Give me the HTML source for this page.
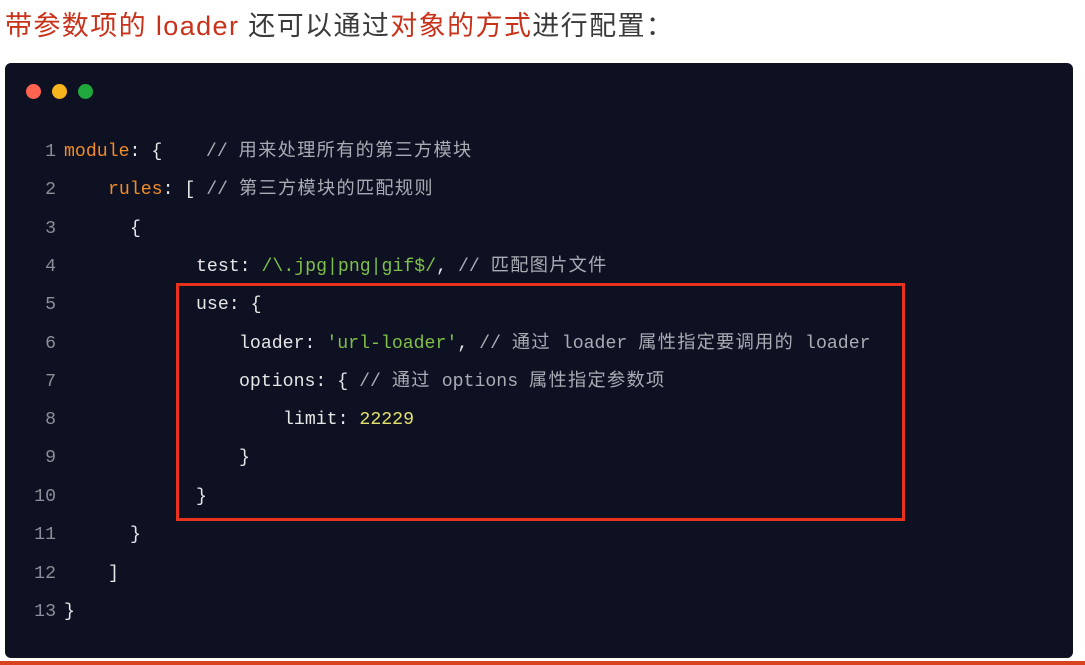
<!DOCTYPE html>
<html><head><meta charset="utf-8"><style>
body{margin:0;width:1085px;height:665px;background:#fff;position:relative;overflow:hidden;font-family:"Liberation Sans","Noto Sans CJK SC",sans-serif}
.title{position:absolute;left:5px;top:8px;font-size:27px;line-height:36px;color:#3a3a3a;white-space:nowrap;letter-spacing:1.4px}
.r{color:#c8321a}
.panel{position:absolute;left:5px;top:63px;width:1068px;height:595px;background:#0d1122;border-radius:6px}
.bar{position:absolute;left:0;top:661px;width:1085px;height:4px;background:#d9421f}
.dot{position:absolute;width:15px;height:15px;border-radius:50%;top:84px}
.ln{position:absolute;left:0;width:1085px;height:24px;font-family:"Liberation Mono","Noto Sans CJK SC",monospace;font-size:18.2px;color:#e6e6e6;white-space:pre;line-height:24px;overflow:visible}
.n{position:absolute;width:56px;left:0;top:2px;text-align:right;color:#8a8f99}
.c{position:absolute;top:2px}
.k{color:#f08c2a}.s{color:#7fbf4a}.y{color:#e5e06a}.g{color:#a8acb3}
.cj{letter-spacing:1.3px}
.box{position:absolute;left:176px;top:283px;width:723px;height:232px;border:3px solid #e8321e}
</style></head><body>
<div class="title"><span class="r">带参数项的 loader</span> 还可以通过<span class="r">对象的方式</span>进行配置：</div>
<div class="panel"></div>
<div class="dot" style="left:26px;background:#ff6450"></div>
<div class="dot" style="left:52px;background:#f6b51c"></div>
<div class="dot" style="left:78px;background:#20a83c"></div>
<div class="ln" style="top:138px"><span class="n">1</span><span class="c" style="left:64px"><span class="k">module</span>: {    <span class="g">// <span class="cj">用来处理所有的第三方模块</span></span></span></div>
<div class="ln" style="top:176px"><span class="n">2</span><span class="c" style="left:108px"><span class="k">rules</span>: [ <span class="g">// <span class="cj">第三方模块的匹配规则</span></span></span></div>
<div class="ln" style="top:215px"><span class="n">3</span><span class="c" style="left:130px">{</span></div>
<div class="ln" style="top:253px"><span class="n">4</span><span class="c" style="left:196px">test: <span class="s">/\.jpg|png|gif$/</span>, <span class="g">// <span class="cj">匹配图片文件</span></span></span></div>
<div class="ln" style="top:291px"><span class="n">5</span><span class="c" style="left:196px">use: {</span></div>
<div class="ln" style="top:330px"><span class="n">6</span><span class="c" style="left:239px">loader: <span class="s">'url-loader'</span>, <span class="g">// <span class="cj">通过</span> loader <span class="cj">属性指定要调用的</span> loader</span></span></div>
<div class="ln" style="top:368px"><span class="n">7</span><span class="c" style="left:239px">options: { <span class="g">// <span class="cj">通过</span> options <span class="cj">属性指定参数项</span></span></span></div>
<div class="ln" style="top:406px"><span class="n">8</span><span class="c" style="left:283px">limit: <span class="y">22229</span></span></div>
<div class="ln" style="top:444px"><span class="n">9</span><span class="c" style="left:239px">}</span></div>
<div class="ln" style="top:483px"><span class="n">10</span><span class="c" style="left:196px">}</span></div>
<div class="ln" style="top:521px"><span class="n">11</span><span class="c" style="left:130px">}</span></div>
<div class="ln" style="top:560px"><span class="n">12</span><span class="c" style="left:108px">]</span></div>
<div class="ln" style="top:598px"><span class="n">13</span><span class="c" style="left:64px">}</span></div>
<div class="box"></div>
<div class="bar"></div>
</body></html>
